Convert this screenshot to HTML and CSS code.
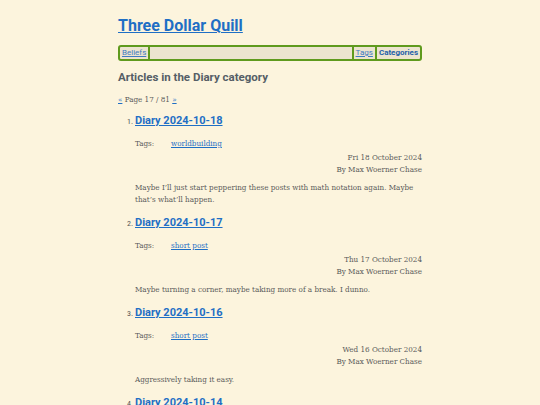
FILE: index.html
```html
<!DOCTYPE html>
<html lang="en">
<head>
<meta charset="utf-8">
<title>Three Dollar Quill</title>
<link rel="stylesheet" href="styles.css">
</head>
<body>
<div class="page">
  <header class="site-header">
    <h1 class="site-title"><a href="#">Three Dollar Quill</a></h1>
    <nav class="nav">
      <a class="nav-item" href="#">Beliefs</a>
      <span class="nav-spacer"></span>
      <a class="nav-item nav-tags" href="#">Tags</a>
      <a class="nav-item nav-current" href="#">Categories</a>
    </nav>
  </header>
  <main>
    <h2 class="section-title">Articles in the Diary category</h2>
    <p class="pager"><a href="#">«</a> Page 17 / 81 <a href="#">»</a></p>
    <ol class="articles">
      <li class="article">
        <h3 class="article-title"><a href="#">Diary 2024-10-18</a></h3>
        <div class="tags"><span class="tags-label">Tags:</span><a href="#">worldbuilding</a></div>
        <div class="meta"><div>Fri 18 October 2024</div><div>By Max Woerner Chase</div></div>
        <p class="summary">Maybe I’ll just start peppering these posts with math notation again. Maybe that’s what’ll happen.</p>
      </li>
      <li class="article">
        <h3 class="article-title"><a href="#">Diary 2024-10-17</a></h3>
        <div class="tags"><span class="tags-label">Tags:</span><a href="#">short post</a></div>
        <div class="meta"><div>Thu 17 October 2024</div><div>By Max Woerner Chase</div></div>
        <p class="summary">Maybe turning a corner, maybe taking more of a break. I dunno.</p>
      </li>
      <li class="article">
        <h3 class="article-title"><a href="#">Diary 2024-10-16</a></h3>
        <div class="tags"><span class="tags-label">Tags:</span><a href="#">short post</a></div>
        <div class="meta"><div>Wed 16 October 2024</div><div>By Max Woerner Chase</div></div>
        <p class="summary">Aggressively taking it easy.</p>
      </li>
      <li class="article">
        <h3 class="article-title"><a href="#">Diary 2024-10-14</a></h3>
        <div class="tags"><span class="tags-label">Tags:</span><a href="#">short post</a></div>
        <div class="meta"><div>Mon 14 October 2024</div><div>By Max Woerner Chase</div></div>
        <p class="summary">Taking it easy.</p>
      </li>
    </ol>
  </main>
</div>
</body>
</html>
```
FILE: styles.css
```css
html, body {
  margin: 0;
  padding: 0;
  background: #fcf4dd;
}
body {
  font-family: "DejaVu Serif Condensed", "DejaVu Serif", serif;
  font-stretch: condensed;
  color: #5a5a5a;
  font-size: 8px;
}
a { color: #1f6fc5; }
.page {
  width: 304px;
  margin: 0 auto;
  padding-top: 15px;
}
.site-title {
  margin: 0;
  font-family: Roboto, sans-serif;
  font-stretch: normal;
  font-size: 16px;
  font-weight: 700;
  line-height: 22px;
}
.site-title a { color: #1f6fc5; }
.nav {
  margin-top: 8px;
  display: flex;
  align-items: stretch;
  border: 2px solid #5f9a1d;
  border-radius: 3px;
  background: #ece4cf;
  height: 12px;
  font-family: Roboto, sans-serif;
  font-stretch: normal;
  font-size: 8px;
  line-height: 12px;
}
.nav-item {
  padding: 0 2px;
  color: #3f7bc2;
}
.nav-item:first-child { border-right: 2px solid #5f9a1d; }
.nav-spacer { flex: 1; }
.nav-tags { border-left: 2px solid #5f9a1d; border-right: 2px solid #5f9a1d; }
.nav-current { font-weight: 700; text-decoration: none; color: #1f5fa8; }
.section-title {
  margin: 8px 0 0;
  font-family: Roboto, sans-serif;
  font-stretch: normal;
  font-size: 11.5px;
  font-weight: 700;
  line-height: 16px;
  color: #555e66;
}
.pager {
  margin: 9px 0 0;
  line-height: 12px;
}
.articles {
  margin: 6px 0 0;
  padding-left: 17px;
}
.article::marker {
  font-family: Roboto, sans-serif;
  font-size: 8px;
  color: #555;
}
.article-title {
  margin: 0;
  font-family: Roboto, sans-serif;
  font-stretch: normal;
  font-size: 11px;
  font-weight: 700;
  line-height: 18px;
}
.tags {
  margin-top: 8px;
  display: flex;
  line-height: 12px;
}
.tags-label { width: 36px; }
.meta {
  text-align: right;
  line-height: 12px;
  margin-top: 2px;
}
.summary {
  margin: 6px 0 0;
  line-height: 12px;
  padding-bottom: 8px;
}
```
